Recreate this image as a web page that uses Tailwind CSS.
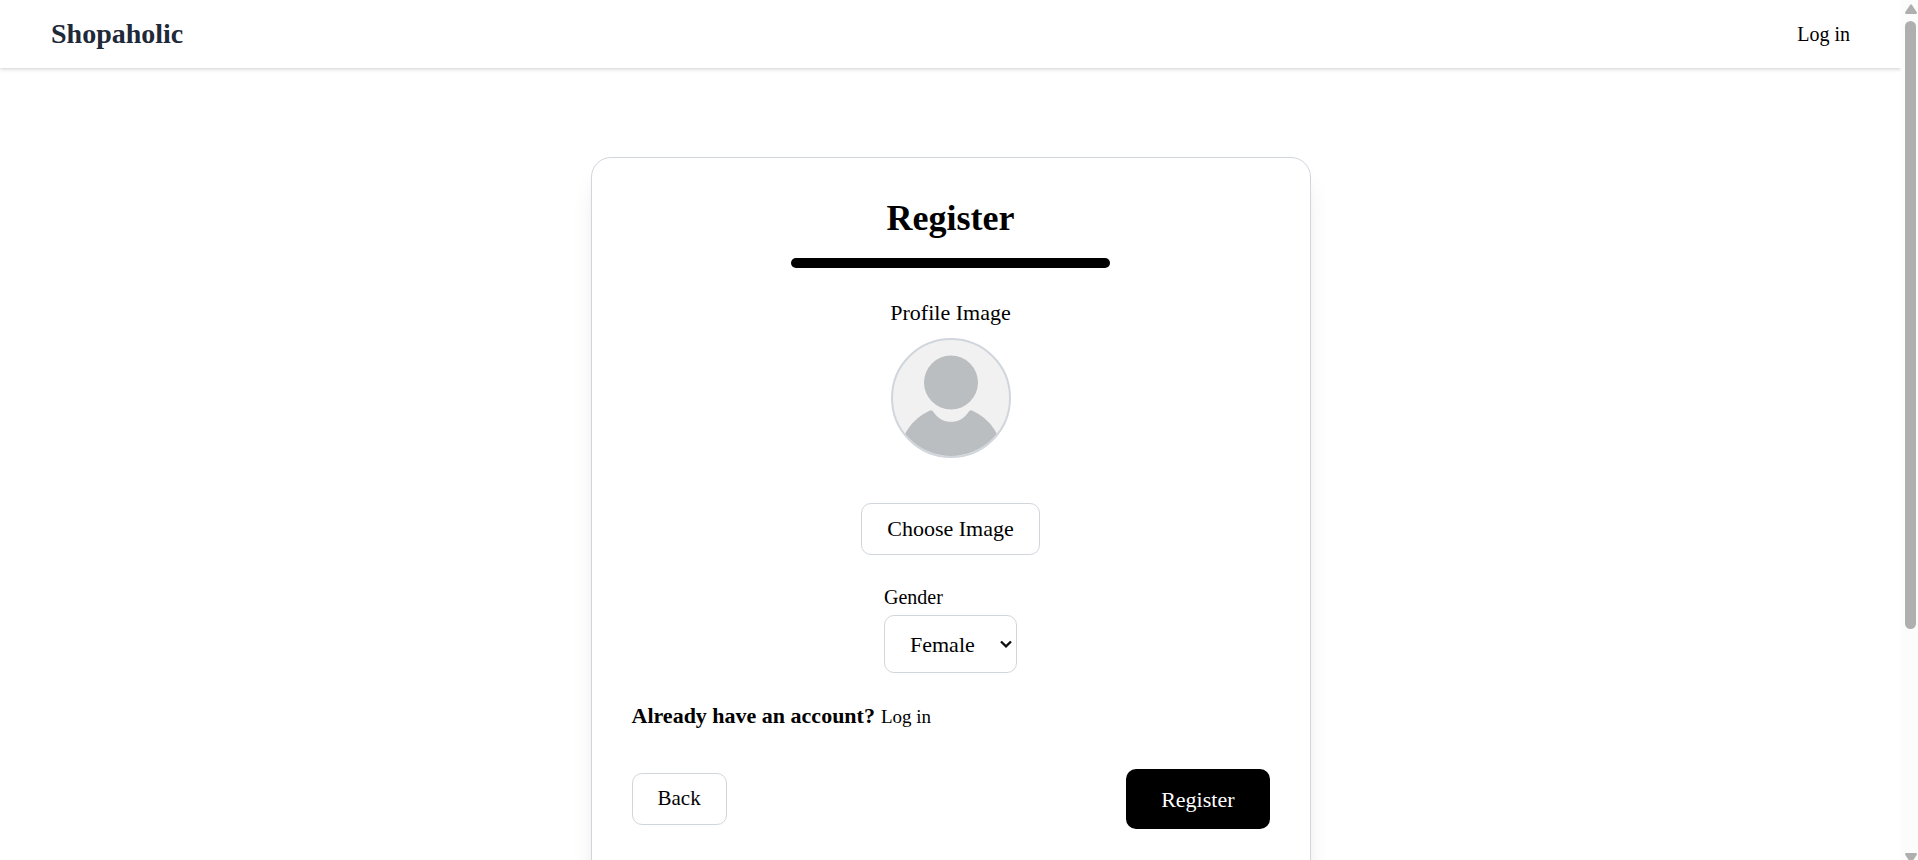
<!DOCTYPE html>
<html lang="en">
<head>
<meta charset="utf-8">
<title>Shopaholic</title>
<script src="https://cdn.jsdelivr.net/npm/@tailwindcss/browser@4"></script>
</head>
<body class="flex h-screen overflow-hidden bg-white font-['Liberation_Serif',serif] text-black">
  <div class="min-w-0 flex-1 overflow-hidden">
    <header class="flex h-[68px] items-center justify-between px-[51px] shadow-[0_1px_4px_rgba(0,0,0,0.2)]">
      <a href="#" class="text-[28px] leading-8 font-bold text-gray-800">Shopaholic</a>
      <a href="#" class="text-[20px] leading-6">Log in</a>
    </header>

    <main class="flex justify-center pt-[89px]">
      <form class="flex w-full max-w-[720px] flex-col items-center rounded-[20px] border border-gray-300 px-10 pt-10 pb-16 shadow-xl">
        <h1 class="text-[36px] leading-10 font-bold">Register</h1>
        <div class="mt-5 h-[10px] w-1/2 rounded-[5px] bg-black"></div>

        <p class="mt-[31px] text-[22px] leading-7">Profile Image</p>
        <div class="mt-[11px] size-[120px] overflow-hidden rounded-full border-2 border-gray-300 bg-[#f1f1f1]">
          <svg viewBox="2 2 116 116" class="size-full" fill="#babec1" aria-hidden="true">
            <circle cx="60" cy="44.500" r="27"/>
            <path d="M8 120A52 52 0 0 1 39 72.500Q41 71.500 42.500 74A20.500 20.500 0 0 0 77.500 74Q79 71.500 81 72.500A52 52 0 0 1 112 120Z"/>
          </svg>
        </div>
        <button type="button" class="mt-[45px] h-[52px] rounded-[10px] border border-gray-300 px-[25px] text-[22px] leading-7">Choose Image</button>

        <div class="mt-[30px] flex flex-col">
          <label for="gender" class="text-[20px] leading-6">Gender</label>
          <div class="relative mt-[6px]">
            <select id="gender" class="h-[58px] w-[133px] appearance-none rounded-[10px] border border-gray-300 bg-white pl-[25px] text-[22px]">
              <option>Female</option>
              <option>Male</option>
            </select>
            <svg viewBox="0 0 12 8" class="pointer-events-none absolute top-[25px] right-[5px] h-2 w-3" fill="none" stroke="#111" stroke-width="2.400" aria-hidden="true"><path d="M1 1.500L6 6.300L11 1.500"/></svg>
          </div>
        </div>

        <p class="mt-[29px] flex items-baseline gap-[6px] self-start leading-7"><strong class="text-[22px]">Already have an account?</strong><a href="#" class="text-[19px]">Log in</a></p>

        <div class="mt-[38px] flex w-full items-center justify-between">
          <button type="button" class="h-[52px] rounded-[10px] border border-gray-300 px-[25px] text-[21px]">Back</button>
          <button type="submit" class="h-[60px] rounded-[10px] bg-black px-[35px] text-[22px] text-white">Register</button>
        </div>
      </form>
    </main>
  </div>

  <div class="flex w-[17px] flex-col items-center bg-[#fcfcfc] pt-1 pl-[2px]" aria-hidden="true">
    <svg viewBox="0 0 12 10" class="h-[10px] w-3 shrink-0" fill="#afafaf"><path d="M5 1Q6 -.5 7 1L11.700 8Q12.300 10 11 10H1Q-.3 10 .3 8Z"/></svg>
    <div class="mt-[7px] h-[71%] w-[11px] shrink-0 rounded-full bg-[#afafaf]"></div>
    <svg viewBox="0 0 12 7" class="mt-auto h-[7px] w-3 shrink-0" fill="#afafaf"><path d="M1 0H11Q12.300 0 11.700 2L8.300 7H3.700L.3 2Q-.3 0 1 0Z"/></svg>
  </div>
</body>
</html>
